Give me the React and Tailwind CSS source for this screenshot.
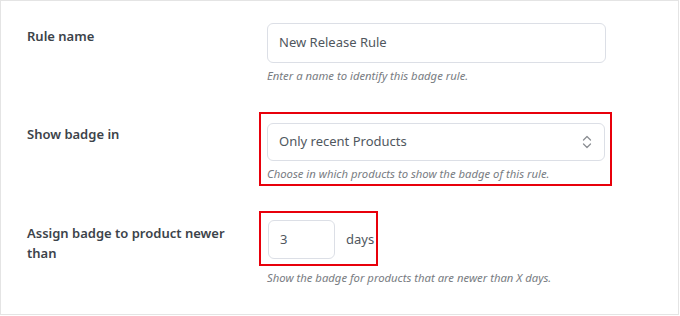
import React from "react";

const font = { fontFamily: '"Noto Sans", "Open Sans", sans-serif' };

function Chevrons() {
  return (
    <svg width="10" height="14" viewBox="0 0 10 14" fill="none" stroke="#8c8f94" strokeWidth="1.3" strokeLinecap="round" strokeLinejoin="round">
      <path d="M1.5 5 L5 1.5 L8.5 5" />
      <path d="M1.5 9 L5 12.5 L8.5 9" />
    </svg>
  );
}

export default function App() {
  return (
    <div className="w-[680px] h-[316px] bg-white" style={font}>
      <div className="w-[679px] h-[315px] border border-[#e4e4e4] flex flex-col">
        {/* Row 1 */}
        <div className="flex pt-[22px]">
          <div className="w-[266px] pl-[26px] pt-[3px] text-[13px] leading-[20px] font-semibold text-[#3c434a]">
            Rule name
          </div>
          <div className="flex flex-col">
            <div className="w-[339px] h-[40px] border border-[#dcdfe6] rounded-[6px] flex items-center pl-[11px] text-[13px] text-[#50575e]">
              New Release Rule
            </div>
            <div className="mt-[4px] text-[11.3px] leading-[18px] italic text-[#787c82]">
              Enter a name to identify this badge rule.
            </div>
          </div>
        </div>

        {/* Row 2 */}
        <div className="flex mt-[27px]">
          <div className="w-[266px] pl-[26px] pt-[12px] text-[13px] leading-[20px] font-semibold text-[#3c434a]">
            Show badge in
          </div>
          <div className="ml-[-8px] w-[353px] border-2 border-[#e8000b] pl-[6px] pt-[9px] pb-[1px]">
            <div className="w-[338px] h-[38px] border border-[#dcdfe6] rounded-[6px] flex items-center justify-between pl-[11px] pr-[12px] text-[13px] text-[#50575e]">
              <span>Only recent Products</span>
              <Chevrons />
            </div>
            <div className="mt-[4px] text-[11.3px] leading-[18px] italic text-[#787c82]">
              Choose in which products to show the badge of this rule.
            </div>
          </div>
        </div>

        {/* Row 3 */}
        <div className="flex mt-[25px]">
          <div className="w-[266px] pl-[26px] pt-[12px] text-[13px] leading-[20px] font-semibold text-[#3c434a]">
            Assign badge to product newer
            <br />
            than
          </div>
          <div className="flex flex-col">
            <div className="ml-[-8px] w-[119px] h-[55px] border-2 border-[#e8000b] pl-[7px] pt-[7px] flex items-start">
              <div className="w-[67px] h-[39px] border border-[#dcdfe6] rounded-[6px] flex items-center pl-[11px] text-[13px] text-[#50575e]">
                3
              </div>
              <div className="ml-[11px] h-[39px] flex items-center text-[13px] text-[#50575e]">days</div>
            </div>
            <div className="mt-[3px] text-[11.3px] leading-[18px] italic text-[#787c82]">
              Show the badge for products that are newer than X days.
            </div>
          </div>
        </div>
      </div>
    </div>
  );
}
